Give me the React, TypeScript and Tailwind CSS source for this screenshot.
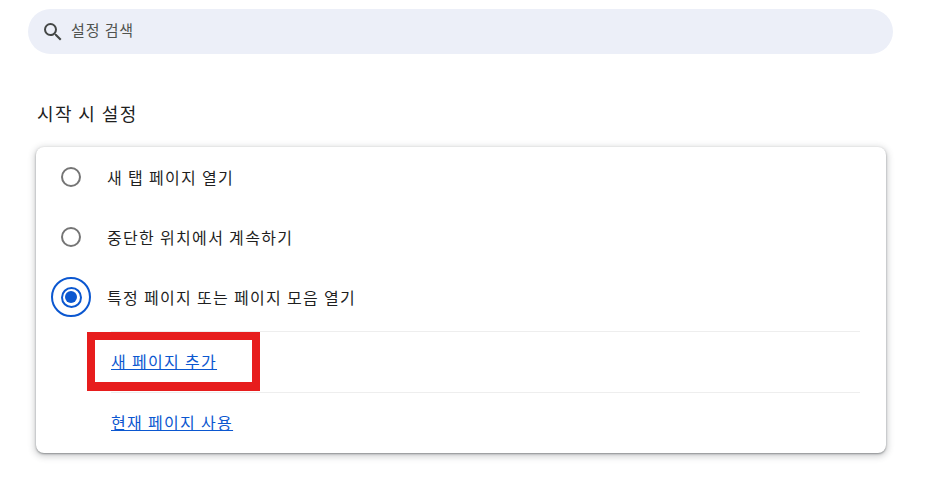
import React from "react";

const font = { fontFamily: '"Noto Sans CJK KR", "Noto Sans", sans-serif' };

function Radio({ selected }: { selected?: boolean }) {
  if (selected) {
    return (
      <span className="flex h-10 w-10 items-center justify-center rounded-full border-2 border-[#0b57d0]">
        <span className="flex h-[21px] w-[21px] items-center justify-center rounded-full border-2 border-[#0b57d0]">
          <span className="h-3 w-3 rounded-full bg-[#0b57d0]" />
        </span>
      </span>
    );
  }
  return <span className="h-5 w-5 rounded-full border-2 border-[#757575]" />;
}

function Row({ label, selected }: { label: string; selected?: boolean }) {
  return (
    <div className={selected ? "flex h-[64px] items-center pb-1" : "flex h-[60px] items-center"}>
      <div className="flex w-10 items-center justify-center">
        <Radio selected={selected} />
      </div>
      <span className="ml-4 text-[16px] leading-5 tracking-[1.32px] text-[#1f1f1f]">{label}</span>
    </div>
  );
}

export default function App() {
  return (
    <div style={font} className="h-[497px] w-[932px] overflow-hidden bg-white pl-[28px] pt-[9px]">
      <div className="flex h-[45px] w-[865px] items-center rounded-full bg-[#eceff8] pl-[13px]">
        <svg width="24" height="24" viewBox="0 0 24 24" fill="#444746">
          <path d="M15.5 14h-.79l-.28-.27A6.47 6.47 0 0 0 16 9.5 6.5 6.5 0 1 0 9.5 16c1.61 0 3.09-.59 4.23-1.57l.27.28v.79l5 4.99L20.49 19l-4.99-5zm-6 0C7.01 14 5 11.99 5 9.5S7.01 5 9.5 5 14 7.01 14 9.5 11.99 14 9.5 14z" />
        </svg>
        <span className="mb-[3px] ml-[6px] text-[15px] leading-5 tracking-[0.9px] text-[#50534f]">설정 검색</span>
      </div>

      <h2 className="ml-[9px] mt-[47px] text-[18px] font-normal leading-6 tracking-[1.4px] text-[#1f1f1f]">시작 시 설정</h2>

      <div className="ml-[8px] mt-[22px] h-[306px] w-[850px] rounded-lg bg-white pl-[15px] pr-[26px] shadow-[0_1px_2px_rgba(60,64,67,0.5),0_2px_6px_2px_rgba(60,64,67,0.22)]">
        <Row label="새 탭 페이지 열기" />
        <Row label="중단한 위치에서 계속하기" />
        <Row label="특정 페이지 또는 페이지 모음 열기" selected />
        <div className="ml-[60px] flex h-[61px] items-center border-t border-[#eeeeee] pb-[2px]">
          <a className="text-[16px] leading-5 tracking-[1.32px] text-[#0b57d0] underline" href="#">새 페이지 추가</a>
        </div>
        <div className="ml-[60px] flex h-[61px] items-center border-t border-[#eeeeee] pb-[2px]">
          <a className="text-[16px] leading-5 tracking-[1.32px] text-[#0b57d0] underline" href="#">현재 페이지 사용</a>
        </div>
      </div>
      <div className="absolute left-[87px] top-[332px] h-[59px] w-[173px] border-[8px] border-b-[9px] border-[#e71d1d]" />
    </div>
  );
}
